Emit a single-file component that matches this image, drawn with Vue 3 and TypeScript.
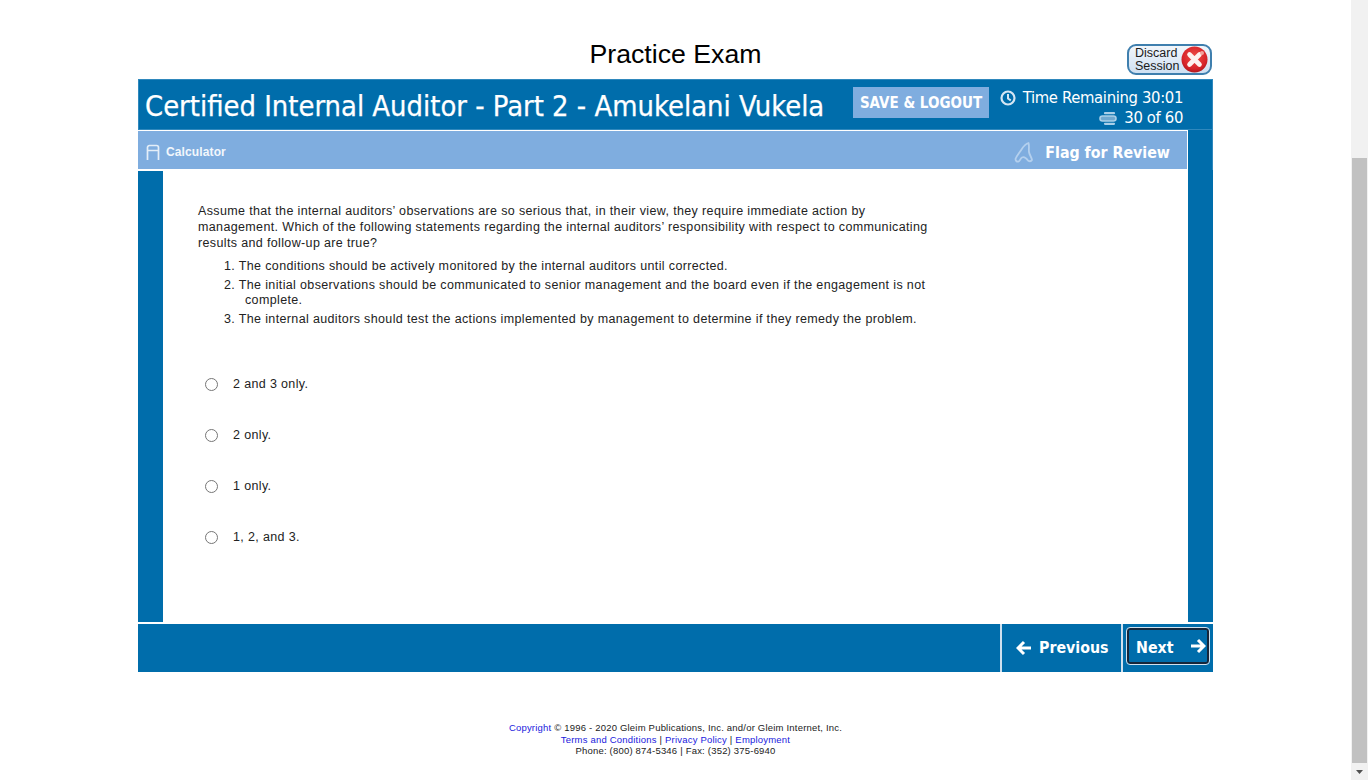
<script setup lang="ts">
const statements = [
  { n: '1.', text: 'The conditions should be actively monitored by the internal auditors until corrected.' },
  { n: '2.', text: 'The initial observations should be communicated to senior management and the board even if the engagement is not complete.' },
  { n: '3.', text: 'The internal auditors should test the actions implemented by management to determine if they remedy the problem.' },
]
const answers = ['2 and 3 only.', '2 only.', '1 only.', '1, 2, and 3.']
</script>

<template>
  <div class="screen">
    <main class="page">
      <div class="top">
        <h1 class="page-title">Practice Exam</h1>
        <button class="discard">
          <span class="discard-text">Discard<br />Session</span>
          <svg class="discard-icon" width="27" height="27" viewBox="0 0 27 27">
            <defs>
              <radialGradient id="redball" cx="0.5" cy="0.4" r="0.65">
                <stop offset="0" stop-color="#ee5048" />
                <stop offset="0.7" stop-color="#d8242a" />
                <stop offset="1" stop-color="#a31419" />
              </radialGradient>
            </defs>
            <circle cx="13.5" cy="13.5" r="13" fill="url(#redball)" />
            <path d="M8.500 8.500l10 10M18.500 8.500l-10 10" stroke="#fdf2f0" stroke-width="4.600" stroke-linecap="round" />
            <circle cx="21" cy="7" r="2" fill="#f3a29c" />
          </svg>
        </button>
      </div>

      <section class="exam">
        <header class="head">
          <div class="exam-title">Certified Internal Auditor - Part 2 - Amukelani Vukela</div>
          <div class="save">SAVE &amp; LOGOUT</div>
          <div class="status">
            <div class="status-line">
              <svg width="16" height="16" viewBox="0 0 16 16" fill="none" stroke="#d5e6f3" stroke-width="2.200">
                <circle cx="8" cy="8" r="6.500" />
                <path d="M8 4v4.500l2.800 1.800" stroke-width="2" />
              </svg>
              <span>Time Remaining 30:01</span>
            </div>
            <div class="status-line">
              <svg width="18" height="13" viewBox="0 0 18 13" fill="none" stroke="#a9cfe8" stroke-linecap="round">
                <path d="M6 1.200h9M6 11.800h9" stroke-width="2.200" />
                <rect x="1" y="4" width="16" height="5" rx="2.500" fill="#6fa9d0" stroke-width="1.600" />
              </svg>
              <span>30 of 60</span>
            </div>
          </div>
        </header>

        <div class="middle">
          <div class="content-col">
            <div class="toolbar">
              <div class="calc">
                <svg width="14" height="16" viewBox="0 0 14 16" fill="none" stroke="#e4eef8" stroke-width="1.700">
                  <path d="M1.500 16V3.500a2 2 0 0 1 2-2h7a2 2 0 0 1 2 2V16M1.500 6.500h11" />
                </svg>
                <span>Calculator</span>
              </div>
              <div class="flag">
                <svg width="19" height="21" viewBox="0 0 19 21" fill="none" stroke="#b4d0ee" stroke-width="1.800" stroke-linejoin="round">
                  <path d="M1.500 17c1-3 3-5 5-8s4-7 8-8c1 3 0 6 .5 9s2.500 5 3 8c-1 1.500-2.500 1.500-4 .5-1.500-2-4-4-6-3s-2 4-3.500 4c-2 .5-3-1-3-2.500z" />
                </svg>
                <span>Flag for Review</span>
              </div>
            </div>
            <div class="work">
              <div class="rail"></div>
              <div class="question">
                <p class="stem">Assume that the internal auditors’ observations are so serious that, in their view, they require immediate action by management. Which of the following statements regarding the internal auditors’ responsibility with respect to communicating results and follow-up are true?</p>
                <ol class="statements">
                  <li v-for="s in statements" :key="s.n"><span class="num">{{ s.n }}</span> {{ s.text }}</li>
                </ol>
                <div class="answers">
                  <label v-for="a in answers" :key="a" class="answer">
                    <span class="radio"></span>
                    <span>{{ a }}</span>
                  </label>
                </div>
              </div>
            </div>
          </div>
          <div class="right-rail"></div>
        </div>

        <footer class="nav">
          <div class="nav-btn prev">
            <svg width="15" height="16" viewBox="0 0 15 16" fill="none" stroke="#fff" stroke-width="3">
              <path d="M8 2L2 8l6 6M2.500 8H15" />
            </svg>
            <span>Previous</span>
          </div>
          <div class="next-wrap">
            <div class="next">
              <span class="next-label">Next</span>
              <svg width="15" height="16" viewBox="0 0 15 16" fill="none" stroke="#fff" stroke-width="3">
                <path d="M7 2l6 6-6 6M12.500 8H0" />
              </svg>
            </div>
          </div>
        </footer>
      </section>

      <div class="legal">
        <div><a>Copyright</a> © 1996 - 2020 Gleim Publications, Inc. and/or Gleim Internet, Inc.</div>
        <div><a>Terms and Conditions</a> | <a>Privacy Policy</a> | <a>Employment</a></div>
        <div>Phone: (800) 874-5346 | Fax: (352) 375-6940</div>
      </div>
    </main>

    <aside class="scrollbar">
      <svg class="arrow" width="17" height="17" viewBox="0 0 17 17"><path d="M5 7h7l-3.500 4z" fill="#f1f1f1" /></svg>
      <div class="thumb"></div>
      <svg class="arrow" width="17" height="17" viewBox="0 0 17 17"><path d="M5 7h7l-3.500 4z" fill="#505050" /></svg>
    </aside>
  </div>
</template>

<style>
html, body { margin: 0; overflow: hidden; background: #fff; }
</style>

<style scoped>
.screen {
  display: flex;
  height: 780px;
  font-family: "Liberation Sans", Arial, sans-serif;
  color: #1a1a1a;
}
.page {
  width: 1351px;
  padding: 36px 138px 0;
  box-sizing: border-box;
}
.top {
  height: 43px;
  position: relative;
}
.page-title {
  margin: 0;
  text-align: center;
  font-size: 26.700px;
  font-weight: 400;
  line-height: 36px;
  color: #000;
}
.discard {
  position: absolute;
  right: 1px;
  top: 8px;
  width: 85px;
  height: 31px;
  padding: 0 2px 0 6px;
  box-sizing: border-box;
  display: flex;
  align-items: center;
  justify-content: space-between;
  border: 2px solid #3f7fae;
  border-radius: 9px;
  background: linear-gradient(#f2f6fb, #cfe0f2);
  font-family: inherit;
}
.discard-text {
  font-size: 12.500px;
  line-height: 13px;
  color: #1b1b1b;
  text-align: left;
}
.discard-icon { flex: none; }

.exam { width: 1075px; }
.head {
  height: 51px;
  background: #006dab;
  display: flex;
  align-items: flex-start;
  box-sizing: border-box;
  color: #fff;
  box-shadow: inset 0 0 0 1px #2f88bd;
}
.exam-title {
  margin-left: 7px;
  width: 708px;
  flex: none;
  font-family: "DejaVu Sans", Verdana, sans-serif;
  font-stretch: condensed;
  font-size: 28.850px;
  line-height: 55px;
  white-space: nowrap;
  -webkit-text-stroke: 0.25px #fff;
}
.save {
  width: 136px;
  height: 31px;
  margin-top: 8px;
  flex: none;
  background: #7faddf;
  color: #fff;
  font-family: "DejaVu Sans", Verdana, sans-serif;
  font-stretch: condensed;
  font-weight: 700;
  font-size: 15px;
  line-height: 33px;
  text-align: center;
  white-space: nowrap;
}
.status {
  flex: 1;
  padding: 9px 30px 0 0;
  font-family: "DejaVu Sans", Verdana, sans-serif;
  font-stretch: condensed;
  font-size: 16.500px;
  letter-spacing: -0.35px;
  line-height: 20px;
}
.status-line {
  display: flex;
  justify-content: flex-end;
  align-items: center;
  gap: 7px;
  white-space: nowrap;
}
.middle {
  display: flex;
  height: 492px;
}
.content-col { width: 1050px; flex: none; }
.right-rail {
  width: 25px;
  background: linear-gradient(to left, #2f88bd 1px, #006dab 1px) 0 0 / 100% 40px no-repeat, #006dab;
}
.toolbar {
  margin-top: 1px;
  height: 38px;
  width: 1049px;
  background: #7faddf;
  display: flex;
  align-items: center;
  justify-content: space-between;
  color: #fff;
}
.calc {
  display: flex;
  align-items: center;
  gap: 6px;
  margin: 4px 0 0 8px;
  font-size: 12px;
  letter-spacing: 0.12px;
  font-weight: 700;
  color: #f2f7fc;
}
.flag {
  display: flex;
  align-items: center;
  gap: 12px;
  margin: 4px 17px 0 0;
  font-family: "DejaVu Sans", Verdana, sans-serif;
  font-stretch: condensed;
  font-weight: 700;
  font-size: 15.800px;
  white-space: nowrap;
}
.work {
  display: flex;
  margin-top: 2px;
  height: 451px;
}
.rail {
  width: 25px;
  background: #006dab;
  flex: none;
}
.question {
  padding: 32px 0 0 35px;
  width: 735px;
  font-size: 12.500px;
  line-height: 16px;
  letter-spacing: 0.36px;
  color: #222;
}
.stem { margin: 0; }
.statements {
  list-style: none;
  margin: 8px 0 0;
  padding: 0 0 0 26px;
}
.statements li {
  line-height: 15px;
  margin-bottom: 4px;
  text-indent: -21px;
  padding-left: 21px;
}
.answers {
  margin-top: 31px;
  display: flex;
  flex-direction: column;
}
.answer {
  height: 51px;
  display: flex;
  align-items: center;
  gap: 15px;
  padding-left: 7px;
}
.radio {
  width: 11px;
  height: 11px;
  margin-top: 1px;
  border: 1px solid #767676;
  border-radius: 50%;
  background: #fff;
  flex: none;
}
.nav {
  margin-top: 2px;
  height: 48px;
  background: #006dab;
  display: flex;
  justify-content: flex-end;
  color: #fff;
  font-family: "DejaVu Sans", Verdana, sans-serif;
  font-stretch: condensed;
  font-weight: 700;
  font-size: 15.800px;
}
.nav-btn {
  width: 121px;
  box-sizing: border-box;
  border-left: 2px solid #cfe0ee;
  display: flex;
  align-items: center;
  gap: 8px;
  padding: 0 0 1px 14px;
}
.next-wrap {
  width: 92px;
  box-sizing: border-box;
  border-left: 2px solid #cfe0ee;
  padding: 4px 4px 8px 4px;
}
.next {
  height: 100%;
  box-sizing: border-box;
  border: 2px solid #16263a;
  outline: 1px solid #cfe0ee;
  border-radius: 3px;
  display: flex;
  align-items: center;
  justify-content: space-between;
  padding: 0 1px 0 7px;
}
.next-label { padding-top: 2px; }
.legal {
  margin-top: 50px;
  text-align: center;
  font-size: 9.500px;
  line-height: 11.500px;
  letter-spacing: 0.2px;
  color: #222;
}
.legal a { color: #1a1add; }
.scrollbar {
  width: 17px;
  height: 780px;
  flex: none;
  background: #f1f1f1;
  display: flex;
  flex-direction: column;
  align-items: center;
}
.arrow { flex: none; }
.thumb {
  width: 15px;
  margin-top: 141px;
  height: 605px;
  background: #c1c1c1;
  flex: none;
}
</style>
